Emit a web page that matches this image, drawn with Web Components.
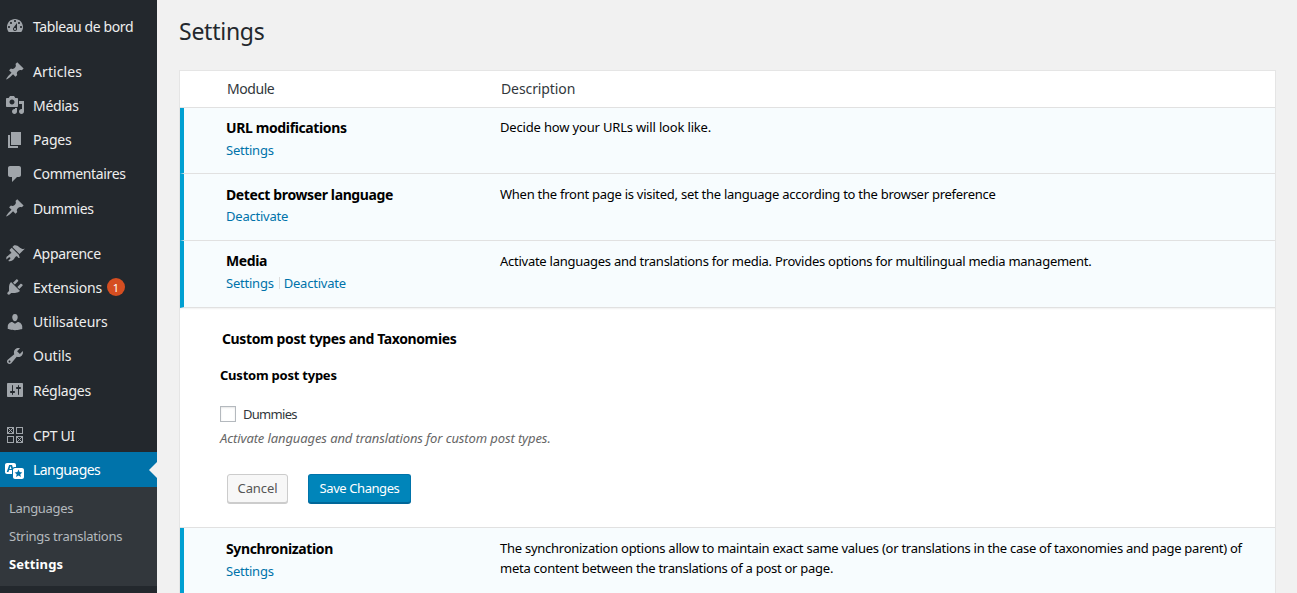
<!DOCTYPE html>
<html lang="fr"><head><meta charset="utf-8"><title>Settings</title>
<style>
html,body{margin:0;padding:0;height:593px;overflow:hidden;background:#f1f1f1;font:13px "Noto Sans","Open Sans",sans-serif;color:#23282d}
wp-app{display:flex;height:593px;overflow:hidden}
</style></head><body>
<wp-app>
<wp-sidebar>
 <wp-group>
  <wp-item label="Tableau de bord" icon="dashboard" style="--ls:-.4px"></wp-item>
 </wp-group>
 <wp-group>
  <wp-item label="Articles" icon="pin" style="--ls:.1px"></wp-item>
  <wp-item label="Médias" icon="media" style="--ls:-.3px"></wp-item>
  <wp-item label="Pages" icon="page" style="--ls:-.2px"></wp-item>
  <wp-item label="Commentaires" icon="comments" style="--ls:-.33px"></wp-item>
  <wp-item label="Dummies" icon="pin" style="--ls:-.4px"></wp-item>
 </wp-group>
 <wp-group>
  <wp-item label="Apparence" icon="appearance" style="--ls:-.33px"></wp-item>
  <wp-item label="Extensions" icon="plugins" badge="1" style="--ls:-.2px"></wp-item>
  <wp-item label="Utilisateurs" icon="users"></wp-item>
  <wp-item label="Outils" icon="tools"></wp-item>
  <wp-item label="Réglages" icon="settings" style="--ls:-.25px"></wp-item>
 </wp-group>
 <wp-group style="padding-top:.2px">
  <wp-item label="CPT UI" icon="cpt" style="--ls:-.33px"></wp-item>
  <wp-item label="Languages" icon="translation" current style="--ls:-.55px"></wp-item>
  <wp-submenu>
   <wp-subitem style="--ls:-.33px">Languages</wp-subitem>
   <wp-subitem style="--ls:-.26px">Strings translations</wp-subitem>
   <wp-subitem current style="--ls:.1px">Settings</wp-subitem>
  </wp-submenu>
 </wp-group>
</wp-sidebar>
<wp-main>
 <h1 slot="title">Settings</h1>
 <module-table>
  <module-row style="--dt:9px;--dls:-.17px" name="URL modifications" desc="Decide how your URLs will look like."><a-link>Settings</a-link></module-row>
  <module-row style="--nt:11px;--am:1px" name="Detect browser language" desc="When the front page is visited, set the language according to the browser preference"><a-link>Deactivate</a-link></module-row>
  <module-row name="Media" desc="Activate languages and translations for media. Provides options for multilingual media management."><a-link>Settings</a-link><a-link sep>Deactivate</a-link></module-row>
  <cpt-form></cpt-form>
  <module-row style="--nt:11px" name="Synchronization" desc="The synchronization options allow to maintain exact same values (or translations in the case of taxonomies and page parent) of meta content between the translations of a post or page."><a-link>Settings</a-link></module-row>
 </module-table>
</wp-main>
</wp-app>
<script>
const ICONS={
dashboard:'<path d="M3.76 16h12.48c1.1-1.37 1.76-3.11 1.76-5 0-4.42-3.58-8-8-8s-8 3.58-8 8c0 1.89.66 3.63 1.76 5zM10 4c.55 0 1 .45 1 1s-.45 1-1 1-1-.45-1-1 .45-1 1-1zM6 6c.55 0 1 .45 1 1s-.45 1-1 1-1-.45-1-1 .45-1 1-1zm8 0c.55 0 1 .45 1 1s-.45 1-1 1-1-.45-1-1 .45-1 1-1zm-5.37 5.55L12 7v6c0 1.1-.9 2-2 2s-2-.9-2-2c0-.57.24-1.08.63-1.45zM4 10c.55 0 1 .45 1 1s-.45 1-1 1-1-.45-1-1 .45-1 1-1zm12 0c.55 0 1 .45 1 1s-.45 1-1 1-1-.45-1-1 .45-1 1-1zm-5 3c0-.55-.45-1-1-1s-1 .45-1 1 .45 1 1 1 1-.45 1-1z"/>',
pin:'<path d="M10.44 3.02l1.82-1.82 6.36 6.35-1.83 1.82c-1.05-.68-2.48-.57-3.41.36l-.75.75c-.92.93-1.04 2.35-.35 3.41l-1.83 1.82-2.41-2.41-2.8 2.79c-.42.42-3.38 2.71-3.8 2.29s1.86-3.39 2.28-3.81l2.79-2.79L4.1 9.36l1.83-1.82c1.05.69 2.48.57 3.4-.36l.75-.75c.93-.92 1.05-2.35.36-3.41z"/>',
media:'<path d="M13 11V4c0-.55-.45-1-1-1h-1.67L9 1H5L3.67 3H2c-.55 0-1 .45-1 1v7c0 .55.45 1 1 1h10c.55 0 1-.45 1-1zM7 4.5c1.38 0 2.5 1.12 2.5 2.5S8.38 9.5 7 9.5 4.5 8.38 4.5 7 5.62 4.5 7 4.5zM14 6h5v10.5c0 1.38-1.12 2.5-2.5 2.5S14 17.88 14 16.5s1.12-2.5 2.5-2.5c.17 0 .34.02.5.05V9h-3V6zm-4 8.05V13h2v3.5c0 1.38-1.12 2.5-2.5 2.5S7 17.88 7 16.5 8.12 14 9.5 14c.17 0 .34.02.5.05z"/>',
page:'<path d="M6 15V2h10v13H6zm-1 1h8v2H3V5h2v11z"/>',
comments:'<path d="M5 2h9c1.1 0 2 .9 2 2v7c0 1.1-.9 2-2 2h-2l-5 5v-5H5c-1.1 0-2-.9-2-2V4c0-1.1.9-2 2-2z"/>',
appearance:'<path d="M14.48 11.06L7.41 3.99l1.5-1.5c.5-.56 2.3-.47 3.51.32 1.21.8 1.43 1.28 2.91 2.1 1.18.64 2.45 1.26 4.45.85zm-.71.71L6.7 4.7 4.93 6.47c-.39.39-.39 1.02 0 1.41l1.06 1.06c.39.39.39 1.03 0 1.42-.6.6-1.43 1.11-2.21 1.69-.35.26-.7.53-1.01.84C1.43 13.23.99 14.94 1.5 16.5c.5-.49 1.08-1 1.6-1.52.47-.47 1.27-1.02 1.9-.51.75.6.24 1.4-.23 1.87-.51.5-1.02 1.09-1.52 1.59C5.26 18.5 7 18.11 8.3 16.8c.32-.31.58-.66.84-1.01.58-.78 1.09-1.61 1.69-2.21.39-.39 1.03-.39 1.42 0l1.06 1.06c.39.39 1.02.39 1.41 0z"/>',
plugins:'<path d="M13.11 4.36L9.87 7.6 8 5.73l3.24-3.24c.35-.34 1.05-.2 1.56.32.52.51.66 1.21.31 1.55zm-8 1.77l.91-1.12 9.01 9.01-1.19.84c-.71.71-2.63 1.16-3.82 1.16H6.14L4.9 17.26c-.59.59-1.54.59-2.12 0-.59-.58-.59-1.53 0-2.12l1.24-1.24v-3.88c0-1.13.4-3.19 1.09-3.89zm7.26 3.97l3.24-3.24c.34-.35 1.04-.21 1.55.31.52.51.66 1.21.31 1.55l-3.24 3.25z"/>',
users:'<path d="M10 9.25c-2.27 0-2.73-3.44-2.73-3.44C7 4.02 7.82 2 9.97 2c2.16 0 2.98 2.02 2.71 3.81 0 0-.41 3.44-2.68 3.44zm0 2.57L12.72 10c2.39 0 4.52 2.33 4.52 4.53v2.49s-3.65 1.13-7.24 1.13c-3.65 0-7.24-1.13-7.24-1.13v-2.49c0-2.25 1.94-4.48 4.47-4.48z"/>',
tools:'<path d="M16.68 9.77c-1.34 1.34-3.3 1.67-4.95.99l-5.41 6.52c-.99.99-2.59.99-3.58 0s-.99-2.59 0-3.57l6.52-5.42c-.68-1.65-.35-3.61.99-4.95 1.28-1.28 3.12-1.62 4.72-1.06l-2.89 2.89 2.82 2.82 2.86-2.87c.53 1.58.18 3.39-1.08 4.65zM3.81 16.21c.4.39 1.04.39 1.43 0 .4-.4.4-1.04 0-1.43-.39-.4-1.03-.4-1.43 0-.39.39-.39 1.03 0 1.43z"/>',
settings:'<path d="M18 16V4c0-.55-.45-1-1-1H3c-.55 0-1 .45-1 1v12c0 .55.45 1 1 1h14c.55 0 1-.45 1-1zM8 11h1c.55 0 1 .45 1 1s-.45 1-1 1H8v1.5c0 .28-.22.5-.5.5s-.5-.22-.5-.5V13H6c-.55 0-1-.45-1-1s.45-1 1-1h1V5.5c0-.28.22-.5.5-.5s.5.22.5.5V11zm5-2h-1c-.55 0-1-.45-1-1s.45-1 1-1h1V5.5c0-.28.22-.5.5-.5s.5.22.5.5V7h1c.55 0 1 .45 1 1s-.45 1-1 1h-1v5.5c0 .28-.22.5-.5.5s-.5-.22-.5-.5V9z"/>',
cpt:'<g fill="none" stroke="#a0a5aa" stroke-width="1"><rect x="2.5" y="2.5" width="6" height="6"/><rect x="11.5" y="2.5" width="6" height="6"/><rect x="2.5" y="11.5" width="6" height="6"/><rect x="11.5" y="11.5" width="6" height="6"/><path d="M3 3l5 5M8 3l-5 5M12 12l5 5M17 12l-5 5"/></g>',
translation:'<path d="M11 7H9.49c-.63 0-1.25.3-1.59.7L7 5H4.13l-2.39 7h1.69l.74-2H7v4H2c-1.1 0-2-.9-2-2V5c0-1.1.9-2 2-2h7c1.1 0 2 .9 2 2v2zM6.51 9H4.49l1-2.93zM10 8h7c1.1 0 2 .9 2 2v7c0 1.1-.9 2-2 2h-7c-1.1 0-2-.9-2-2v-7c0-1.1.9-2 2-2zm3.5 1.6l-1.1 2.5-2.7.3 2 1.8-.6 2.7 2.4-1.4 2.4 1.4-.6-2.7 2-1.8-2.7-.3z"/>'
};
function def(name,css,html){
 customElements.define(name,class extends HTMLElement{
  connectedCallback(){
   if(this.shadowRoot)return;
   const r=this.attachShadow({mode:'open'});
   r.innerHTML='<style>'+css+'</style>'+(typeof html==='function'?html(this):html);
  }
 });
}
def('wp-sidebar',':host{display:block;width:157px;flex:none;background:#23282d;padding-top:9px;box-sizing:border-box;height:593px;overflow:hidden}','<slot></slot>');
def('wp-group',':host{display:block;margin-bottom:10.75px}','<slot></slot>');
def('wp-item',`:host{display:flex;align-items:center;height:34.25px;color:#eee;font-size:14px;position:relative}
:host([current]){background:#0073aa;color:#fff}
svg{width:20px;height:20px;margin-left:5px;margin-right:8px;fill:#a0a5aa;flex:none}
:host([current]) svg{fill:#fff}
.t{letter-spacing:var(--ls,0)}
.b{margin-left:5px;width:18px;height:18px;border-radius:50%;background:#d54e21;color:#fff;font-size:11px;display:flex;align-items:center;justify-content:center}
:host([current])::after{content:"";position:absolute;right:0;top:10px;border:8px solid transparent;border-right-color:#f1f1f1;border-left:0}`,
e=>`<svg viewBox="0 0 20 20" aria-hidden="true">${ICONS[e.getAttribute('icon')]}</svg><span class="t">${e.getAttribute('label')}</span>${e.hasAttribute('badge')?`<span class="b">${e.getAttribute('badge')}</span>`:''}`);
def('wp-submenu',':host{display:block;background:#32373c;padding:7px 0 8px}','<slot></slot>');
def('wp-subitem',`:host{display:flex;align-items:center;height:28px;padding-left:9px;color:#b4b9be;font-size:13px;letter-spacing:var(--ls,0)}
:host([current]){color:#fff;font-weight:700}`,'<slot></slot>');
def('wp-main',`:host{display:block;flex:1;min-width:0;padding:0 21px 0 22px;box-sizing:border-box}
::slotted(h1){font-size:23px;font-weight:400;color:#23282d;margin:0;line-height:31px;padding-top:16px;margin-bottom:23px;letter-spacing:-.25px}`,'<slot name="title"></slot><slot></slot>');
def('module-table',`:host{display:block;background:#fff;border:1px solid #e5e5e5;border-bottom:0}
.h{display:grid;grid-template-columns:321px 1fr;height:36px;align-items:center;font-size:14px;color:#32373c;border-bottom:1px solid #e1e1e1}
.h span{position:relative;top:-1px;letter-spacing:-.1px}
.h span:first-child{padding-left:47px;letter-spacing:-.45px}`,'<div class="h"><span>Module</span><span>Description</span></div><slot></slot>');
def('module-row',`:host{display:grid;grid-template-columns:316px 1fr;background:#f7fcfe;border-left:4px solid #00a0d2;border-bottom:1px solid #e1e1e1;height:66px;box-sizing:content-box}
:host(:first-of-type){height:65px}
.n{padding:var(--nt,10px) 0 0 42px;font-size:14px;font-weight:700;color:#000;line-height:20px;letter-spacing:-.38px}
.a{display:flex;margin-top:var(--am,2px);font-weight:400;font-size:13px;line-height:20px;letter-spacing:-.22px}
.d{padding:var(--dt,10px) 16px 0 0;font-size:13px;color:#000;line-height:20px;letter-spacing:var(--dls,-.26px)}`,
e=>`<div class="n">${e.getAttribute('name')}<div class="a"><slot></slot></div></div><div class="d">${e.getAttribute('desc')}</div>`);
def('a-link',`:host{display:inline-block;color:#0073aa}
:host([sep]){margin-left:5px;padding-left:5px;position:relative}
:host([sep])::before{content:"";position:absolute;left:0;top:4px;bottom:4px;width:1px;background:#ddd}`,'<slot></slot>');
def('cpt-form',`:host{display:block;height:220px;box-sizing:border-box;border-bottom:1px solid #e1e1e1;padding:21px 0 0 40px;color:#23282d;box-shadow:inset 0 2px 2px -1px rgba(0,0,0,.06)}
h3{font-size:14px;font-weight:700;color:#000;margin:0 0 0 2px;line-height:20px;letter-spacing:-.38px}
h4{font-size:13px;font-weight:700;color:#000;margin:16px 0 0;line-height:20px;letter-spacing:-.23px}
.c{display:flex;align-items:center;margin-top:19px;height:20px;font-size:13px;color:#32373c;letter-spacing:-.7px}
.b{width:14px;height:14px;border:1px solid #b4b9be;background:#fff;margin-right:7px;box-shadow:inset 0 1px 2px rgba(0,0,0,.1)}
p{margin:4px 0 0;font-style:italic;font-size:13px;color:#666;line-height:20px;letter-spacing:-.11px}
.r{display:flex;gap:20px;margin:26px 0 0 7px}
.btn{box-sizing:border-box;height:29px;display:flex;align-items:center;border-radius:3px;font-size:13px;padding-bottom:2px}
.x{width:61px;justify-content:center;background:#f7f7f7;border:1px solid #ccc;box-shadow:0 1px 0 #ccc;color:#555;letter-spacing:-.1px}
.s{width:103px;justify-content:center;background:#0085ba;border:1px solid #0073aa;border-bottom-color:#006799;box-shadow:0 1px 0 #006799;color:#fff;letter-spacing:-.42px}`,
`<h3>Custom post types and Taxonomies</h3><h4>Custom post types</h4><div class="c"><span class="b"></span><span>Dummies</span></div><p>Activate languages and translations for custom post types.</p><div class="r"><span class="btn x">Cancel</span><span class="btn s">Save Changes</span></div>`);
</script>
</body></html>
